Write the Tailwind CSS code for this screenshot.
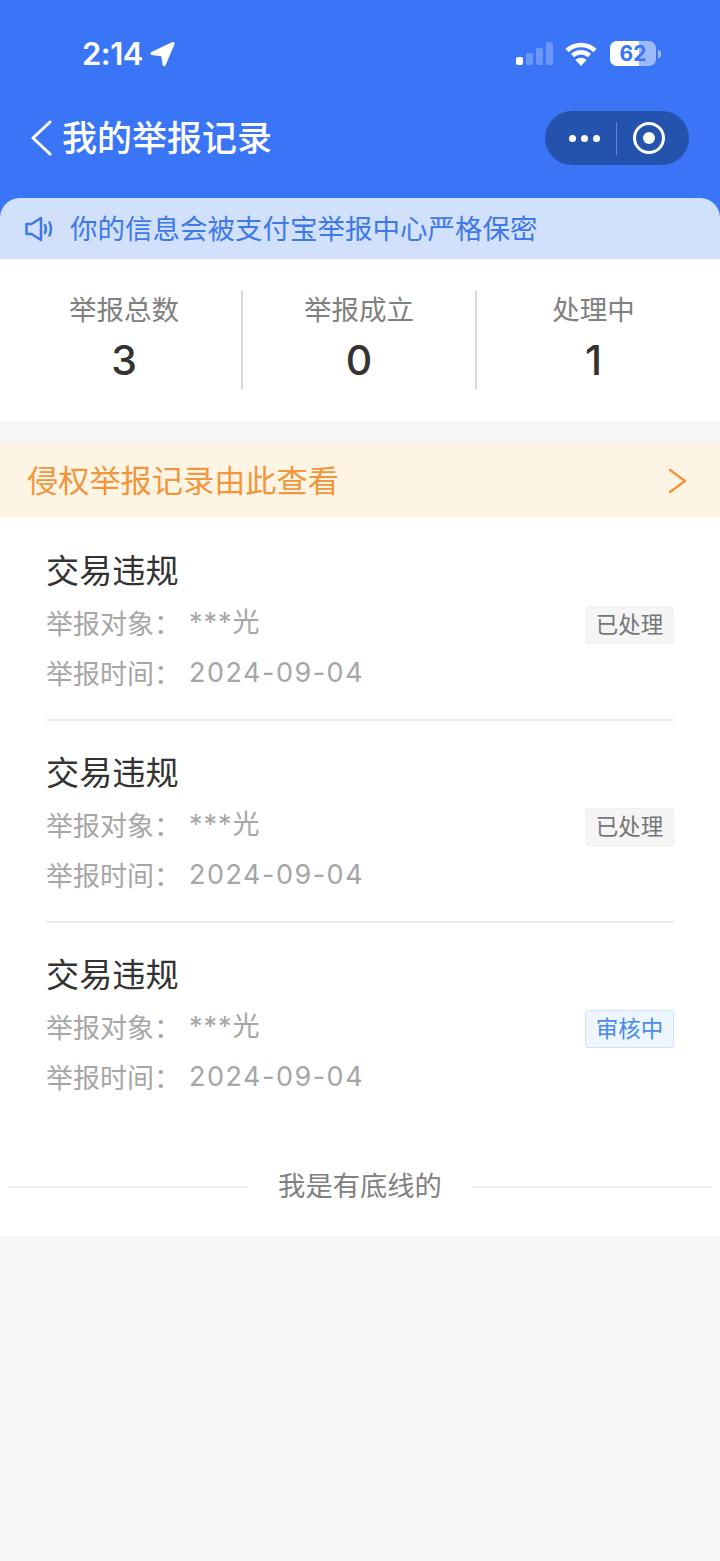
<!DOCTYPE html>
<html lang="zh-CN">
  <head>
    <meta charset="UTF-8" />
    <meta name="viewport" content="width=device-width, initial-scale=1.0" />
    <title>我的举报记录</title>
    <script src="https://cdn.jsdelivr.net/npm/@tailwindcss/browser@4"></script>
  </head>
  <body class="bg-[#f6f6f6] font-['Inter','Noto_Sans_CJK_SC',sans-serif]">
    <div class="w-[720px] h-[1561px] overflow-hidden">
      <!-- header -->
      <header class="h-[198px] bg-[#3a75f7] text-white">
        <!-- status bar -->
        <div class="flex h-[108px] items-start">
          <div class="ml-[82px] mt-[35px] flex items-center">
            <span class="text-[31px] leading-[38px] font-semibold tracking-[-0.5px]">2:14</span>
            <svg class="ml-[7px] size-[25px]" viewBox="0 0 25 25" fill="#fff"><path d="M24.500 2.200 15.600 23.300c-.7 1.500-2.700 1.300-3-.3l-1.300-8.800-9.500-1.300c-1.600-.3-1.900-2.300-.4-3L22.400.1c1.400-.6 2.700.8 2.100 2.100z" /></svg>
          </div>
          <div class="ml-auto mt-[41px] flex items-center">
            <!-- signal -->
            <div class="flex h-[23px] items-end gap-[3px]">
              <span class="h-[8px] w-[7px] rounded-[2px] bg-white"></span>
              <span class="h-[12px] w-[7px] rounded-[2px] bg-white/25"></span>
              <span class="h-[17px] w-[7px] rounded-[2px] bg-white/25"></span>
              <span class="h-[23px] w-[7px] rounded-[2px] bg-white/25"></span>
            </div>
            <!-- wifi -->
            <svg class="ml-[12px] h-[24px] w-[32px]" viewBox="0 0 32 24" fill="none" stroke="#fff" stroke-width="4.500">
              <path d="M2 8.500C10 1 22 1 30 8.500" />
              <path d="M7.500 13.500C12.500 9 19.500 9 24.500 13.500" />
              <path fill="#fff" stroke="none" d="M16 24 10.500 18c3-3 8-3 11 0z" />
            </svg>
            <!-- battery -->
            <div class="relative ml-[13px] flex h-[25px] w-[46px] items-center justify-center overflow-hidden rounded-[7px] bg-white/50">
              <span class="absolute inset-y-0 left-0 w-[29px] bg-white"></span>
              <span class="relative text-[21px] leading-[25px] font-bold text-[#3a75f7]">62</span>
            </div>
            <span class="ml-[2px] mr-[59px] h-[8px] w-[3px] rounded-r-full bg-white/50"></span>
          </div>
        </div>
        <!-- nav bar -->
        <div class="flex h-[60px] items-center">
          <svg class="ml-[30px] h-[36px] w-[22px]" viewBox="0 0 22 36" fill="none" stroke="#fff" stroke-width="3" stroke-linecap="round" stroke-linejoin="round"><path d="M20 2 3 18l17 16" /></svg>
          <h1 class="ml-[10px] text-[35px] leading-[60px] font-medium">我的举报记录</h1>
          <div class="ml-auto mr-[31px] flex h-[54px] w-[144px] items-center rounded-full bg-[#2353ad]">
            <div class="flex w-[71px] justify-center gap-[5px] pl-[7px]">
              <span class="size-[7px] rounded-full bg-white"></span>
              <span class="size-[7px] rounded-full bg-white"></span>
              <span class="size-[7px] rounded-full bg-white"></span>
            </div>
            <span class="h-[33px] w-px bg-white/30"></span>
            <div class="flex flex-1 justify-center pr-[8px]">
              <div class="flex size-[32px] items-center justify-center rounded-full border-[3px] border-white">
                <span class="size-[12px] rounded-full bg-white"></span>
              </div>
            </div>
          </div>
        </div>
      </header>

      <!-- notice -->
      <div class="bg-[#3a75f7]">
        <div class="flex h-[61px] items-center rounded-t-[20px] bg-[#d1e1fb] pl-[24px] text-[#3f78e8]">
          <svg class="h-[26px] w-[29px]" viewBox="0 0 29 26" fill="none" stroke="currentColor" stroke-width="2.500" stroke-linejoin="round" stroke-linecap="round">
            <path d="M2.500 8h5L17 2v22l-9.500-6h-5z" />
            <path d="M21 9c1.200 2.700 1.200 5.300 0 8" />
            <path d="M25.500 6.500c2 4.300 2 8.700 0 13" />
          </svg>
          <p class="ml-[17px] pt-[2px] text-[27.500px] leading-[61px] whitespace-nowrap">你的信息会被支付宝举报中心严格保密</p>
        </div>
      </div>

      <!-- stats -->
      <section class="flex h-[162px] items-start bg-white pt-[32px]">
        <div class="flex h-[98px] w-[243px] flex-col items-center border-r-2 border-r-[#d9d9d9] pl-[7px]">
          <span class="text-[27.500px] leading-[38px] text-[#808080]">举报总数</span>
          <span class="text-[41px] leading-[62px] font-medium text-[#333]">3</span>
        </div>
        <div class="flex h-[98px] w-[234px] flex-col items-center border-r-2 border-r-[#d9d9d9]">
          <span class="text-[27.500px] leading-[38px] text-[#808080]">举报成立</span>
          <span class="text-[41px] leading-[62px] font-medium text-[#333]">0</span>
        </div>
        <div class="flex h-[98px] flex-1 flex-col items-center pr-[10px]">
          <span class="text-[27.500px] leading-[38px] text-[#808080]">处理中</span>
          <span class="text-[41px] leading-[62px] font-medium text-[#333]">1</span>
        </div>
      </section>

      <!-- infringement link -->
      <a class="mt-[22px] flex h-[75px] items-center justify-between bg-[#fdf4e3] pl-[27px] pr-[33px] text-[#f0963c]">
        <span class="pt-[2px] text-[31.200px] leading-[75px]">侵权举报记录由此查看</span>
        <svg class="h-[26px] w-[20px]" viewBox="0 0 20 26" fill="none" stroke="currentColor" stroke-width="2.500" stroke-linecap="round" stroke-linejoin="round"><path d="M3 2l15 11L3 24" /></svg>
      </a>

      <!-- records -->
      <section class="h-[718px] bg-white">
        <div class="mx-[46px] h-[203px] border-b-2 border-b-[#ececec] pt-[31px]">
          <h2 class="text-[33.200px] leading-[44px] text-[#333]">交易违规</h2>
          <div class="mt-[6px] flex items-center justify-between">
            <div class="text-[27px] leading-[50px] text-[#a6a6a6]">
              <p class="-mt-[1px] flex h-[50px]"><span class="w-[143px]">举报对象<span class="font-['Noto_Sans_CJK_TC']">：</span></span><span class="tracking-[1px]">***光</span></p>
              <p class="flex h-[50px]"><span class="w-[143px]">举报时间<span class="font-['Noto_Sans_CJK_TC']">：</span></span><span class="tracking-[1.500px]">2024-09-04</span></p>
            </div>
            <span class="mb-[48px] flex h-[38px] w-[89px] items-center justify-center rounded-[3px] border border-[#efefef] bg-[#f5f5f5] text-[22.500px] text-[#757575]">已处理</span>
          </div>
        </div>
        <div class="mx-[46px] h-[202px] border-b-2 border-b-[#ececec] pt-[30px]">
          <h2 class="text-[33.200px] leading-[44px] text-[#333]">交易违规</h2>
          <div class="mt-[6px] flex items-center justify-between">
            <div class="text-[27px] leading-[50px] text-[#a6a6a6]">
              <p class="-mt-[1px] flex h-[50px]"><span class="w-[143px]">举报对象<span class="font-['Noto_Sans_CJK_TC']">：</span></span><span class="tracking-[1px]">***光</span></p>
              <p class="flex h-[50px]"><span class="w-[143px]">举报时间<span class="font-['Noto_Sans_CJK_TC']">：</span></span><span class="tracking-[1.500px]">2024-09-04</span></p>
            </div>
            <span class="mb-[48px] flex h-[38px] w-[89px] items-center justify-center rounded-[3px] border border-[#efefef] bg-[#f5f5f5] text-[22.500px] text-[#757575]">已处理</span>
          </div>
        </div>
        <div class="mx-[46px] h-[199px] pt-[30px]">
          <h2 class="text-[33.200px] leading-[44px] text-[#333]">交易违规</h2>
          <div class="mt-[6px] flex items-center justify-between">
            <div class="text-[27px] leading-[50px] text-[#a6a6a6]">
              <p class="-mt-[1px] flex h-[50px]"><span class="w-[143px]">举报对象<span class="font-['Noto_Sans_CJK_TC']">：</span></span><span class="tracking-[1px]">***光</span></p>
              <p class="flex h-[50px]"><span class="w-[143px]">举报时间<span class="font-['Noto_Sans_CJK_TC']">：</span></span><span class="tracking-[1.500px]">2024-09-04</span></p>
            </div>
            <span class="mb-[48px] flex h-[38px] w-[89px] items-center justify-center rounded-[3px] border border-[#cfe2fa] bg-[#edf5fe] text-[22.500px] text-[#4a8ae8]">审核中</span>
          </div>
        </div>
        <!-- bottom line -->
        <div class="flex items-center px-[8px] pt-[45px]">
          <span class="h-[2px] w-[240px] bg-[#eeeeee]"></span>
          <span class="flex-1 text-center text-[27.300px] leading-[40px] text-[#808080]">我是有底线的</span>
          <span class="h-[2px] w-[240px] bg-[#eeeeee]"></span>
        </div>
      </section>
    </div>
  </body>
</html>
